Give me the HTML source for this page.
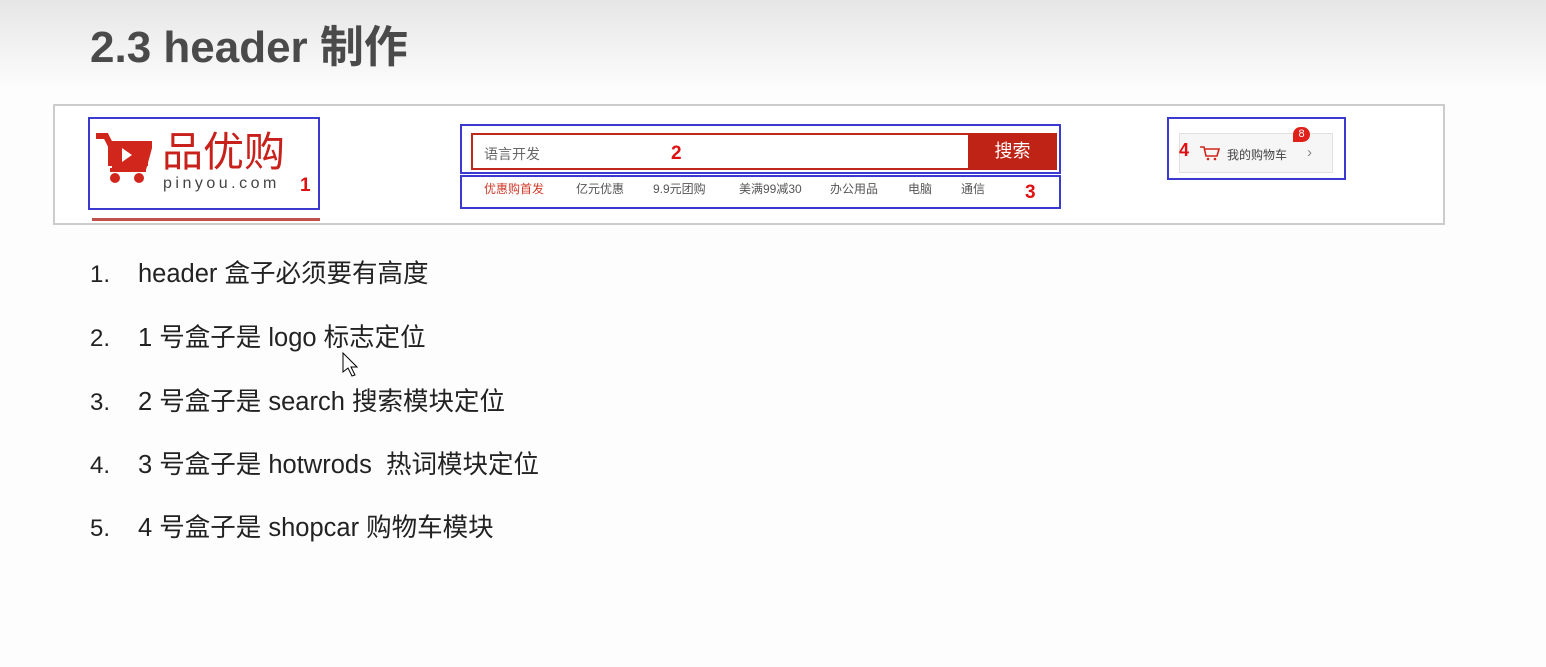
<!DOCTYPE html>
<html><head><meta charset="utf-8"><style>
body{margin:0;width:1546px;height:667px;overflow:hidden;background:#fdfdfd;font-family:"Liberation Sans","Noto Sans CJK SC",sans-serif;position:relative}
.top{position:absolute;left:0;top:0;width:1546px;height:90px;background:linear-gradient(#e6e6e6,#fdfdfd)}
.abs{position:absolute}
h1{position:absolute;left:90px;top:20px;margin:0;font-size:44px;font-weight:bold;color:#4a4a4a;line-height:56px}
.frame{left:53px;top:104px;width:1388px;height:117px;border:2px solid #ccc;background:#fff}
.blue{border:2px solid #3a3ad0;box-sizing:border-box}
.num{color:#e01010;font-weight:bold;font-size:19px}
.li{position:absolute;left:90px;font-size:25.5px;color:#222;line-height:30px;white-space:nowrap}
.li b{font-weight:normal;display:inline-block;width:48px;font-size:24px}
.hw{position:absolute;top:180px;font-size:12px;color:#555}
</style></head><body>
<div class="top"></div>
<h1>2.3 header 制作</h1>
<div class="abs frame"></div>
<div class="abs" style="left:92px;top:218px;width:228px;height:3px;background:#c0504d"></div>
<div class="abs blue" style="left:88px;top:117px;width:232px;height:93px"></div>
<svg class="abs" style="left:94px;top:132px" width="58" height="56" viewBox="0 0 58 56">
<path d="M2 4h10l4 8h40l-6 22H18" fill="none" stroke="#d0261b" stroke-width="6"/>
<rect x="14" y="12" width="40" height="22" fill="#d0261b"/>
<path d="M28 16l10 7-10 7z" fill="#fff"/>
<rect x="16" y="36" width="36" height="4" fill="#d0261b"/>
<circle cx="21" cy="46" r="5" fill="#d0261b"/><circle cx="45" cy="46" r="5" fill="#d0261b"/>
</svg>
<div class="abs" style="left:162px;top:128px;font-size:41px;color:#c8201a;line-height:48px">品优购</div>
<div class="abs" style="left:163px;top:175px;font-size:16px;color:#444;letter-spacing:3.5px">pinyou.com</div>
<div class="abs num" style="left:300px;top:175px">1</div>
<div class="abs blue" style="left:460px;top:124px;width:601px;height:50px"></div>
<div class="abs" style="left:471px;top:133px;width:499px;height:37px;border:2px solid #c0281c;box-sizing:border-box;background:#fff"></div>
<div class="abs" style="left:484px;top:144px;font-size:14px;color:#666">语言开发</div>
<div class="abs" style="left:968px;top:133px;width:89px;height:37px;background:#bf2315;color:#fff;font-size:18px;text-align:center;line-height:37px">搜索</div>
<div class="abs num" style="left:671px;top:143px">2</div>
<div class="abs blue" style="left:460px;top:175px;width:601px;height:34px"></div>
<div class="hw" style="left:484px;color:#d03a2a">优惠购首发</div>
<div class="hw" style="left:576px">亿元优惠</div>
<div class="hw" style="left:653px">9.9元团购</div>
<div class="hw" style="left:739px">美满99减30</div>
<div class="hw" style="left:830px">办公用品</div>
<div class="hw" style="left:908px">电脑</div>
<div class="hw" style="left:961px">通信</div>
<div class="abs num" style="left:1025px;top:182px">3</div>
<div class="abs blue" style="left:1167px;top:117px;width:179px;height:63px"></div>
<div class="abs" style="left:1179px;top:133px;width:152px;height:38px;border:1px solid #e0e0e0;background:#f6f6f6"></div>
<div class="abs num" style="left:1179px;top:140px;font-size:18px">4</div>
<svg class="abs" style="left:1199px;top:145px" width="22" height="16" viewBox="0 0 22 16"><path d="M1 2h4l2 9h11l2-7H6" fill="none" stroke="#d0261b" stroke-width="1.6"/><circle cx="9" cy="14" r="1.3" fill="#d0261b"/><circle cx="16" cy="14" r="1.3" fill="#d0261b"/></svg>
<div class="abs" style="left:1227px;top:146px;font-size:12px;color:#444">我的购物车</div>
<div class="abs" style="left:1307px;top:144px;font-size:15px;color:#888">›</div>
<div class="abs" style="left:1293px;top:127px;width:17px;height:15px;border-radius:8px 8px 8px 0;background:#e0201a;color:#fff;font-size:11px;text-align:center;line-height:15px">8</div>
<div class="li" style="top:259px"><b>1.</b>header 盒子必须要有高度</div>
<div class="li" style="top:323px"><b>2.</b>1 号盒子是 logo 标志定位</div>
<div class="li" style="top:387px"><b>3.</b>2 号盒子是 search 搜索模块定位</div>
<div class="li" style="top:450px"><b>4.</b>3 号盒子是 hotwrods &nbsp;热词模块定位</div>
<div class="li" style="top:513px"><b>5.</b>4 号盒子是 shopcar 购物车模块</div>
<svg class="abs" style="left:342px;top:352px" width="16" height="26" viewBox="0 0 16 26"><path d="M1 1v19l5-4 4 8 3-1-4-8h6z" fill="#fff" stroke="#000" stroke-width="1"/></svg>
</body></html>
